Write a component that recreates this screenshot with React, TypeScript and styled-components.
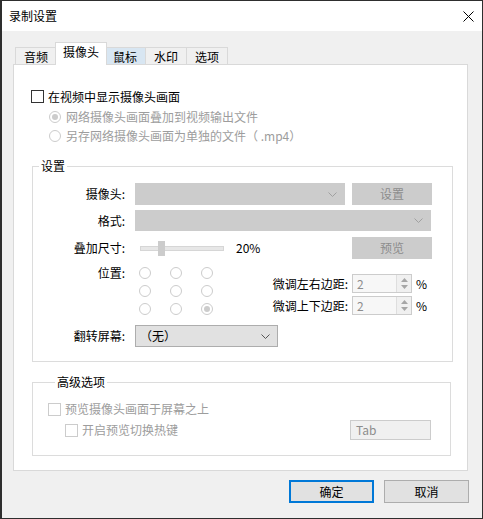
import styled, { createGlobalStyle } from 'styled-components'

const GlobalStyle = createGlobalStyle`
  html, body {
    margin: 0;
    padding: 0;
    background: #f0f0f0;
  }
  * {
    box-sizing: border-box;
  }
  body {
    font-family: "Noto Sans CJK SC", "Microsoft YaHei", sans-serif;
    font-size: 12px;
    color: #000;
  }
`

const Chevron = ({ color = '#a0a0a0' }: { color?: string }) => (
  <svg width="9" height="5" viewBox="0 0 9 5">
    <polyline points="0.5,0.5 4.5,4.5 8.5,0.5" fill="none" stroke={color} strokeWidth="1" />
  </svg>
)

const SpinArrows = () => (
  <SpinButtons>
    <svg width="7" height="4" viewBox="0 0 7 4">
      <polygon points="3.5,0 7,4 0,4" fill="#a6a6a6" />
    </svg>
    <svg width="7" height="4" viewBox="0 0 7 4">
      <polygon points="0,0 7,0 3.5,4" fill="#a6a6a6" />
    </svg>
  </SpinButtons>
)

const tabs = ['音频', '摄像头', '鼠标', '水印', '选项']

const App = () => {
  return (
    <>
      <GlobalStyle />
      <Window>
        <TitleBar>
          <span>录制设置</span>
          <svg width="11" height="11" viewBox="0 0 11 11">
            <path d="M0.5 0.5 L10.5 10.5 M10.5 0.5 L0.5 10.5" stroke="#000" strokeWidth="1" />
          </svg>
        </TitleBar>

        <Body>
          <TabStrip>
            {tabs.map((t) => (
              <Tab key={t} $active={t === '摄像头'} $hover={t === '鼠标'}>
                {t}
              </Tab>
            ))}
          </TabStrip>

          <Panel>
            <CheckRow>
              <CheckBox />
              <span>在视频中显示摄像头画面</span>
            </CheckRow>
            <RadioRow>
              <Radio $checked />
              <span>网络摄像头画面叠加到视频输出文件</span>
            </RadioRow>
            <RadioRow>
              <Radio />
              <span>另存网络摄像头画面为单独的文件（ .mp4）</span>
            </RadioRow>

            <GroupBox $width={421} $padRight={20}>
              <Legend>设置</Legend>
              <FieldRow>
                <FieldLabel>摄像头:</FieldLabel>
                <Combo $width={210} $disabled>
                  <Chevron />
                </Combo>
                <PushButton>设置</PushButton>
              </FieldRow>
              <FieldRow $top={5}>
                <FieldLabel>格式:</FieldLabel>
                <Combo $width={296} $height={21} $disabled>
                  <Chevron />
                </Combo>
              </FieldRow>
              <FieldRow $top={6}>
                <FieldLabel>叠加尺寸:</FieldLabel>
                <Slider>
                  <SliderThumb />
                </Slider>
                <Percent>20%</Percent>
                <PushButton>预览</PushButton>
              </FieldRow>
              <FieldRow $top={5} $align="flex-start">
                <FieldLabel $lineHeight={18}>位置:</FieldLabel>
                <RadioGrid>
                  {Array.from({ length: 9 }).map((_, i) => (
                    <Radio key={i} $checked={i === 8} />
                  ))}
                </RadioGrid>
                <SpinGrid>
                  <span>微调左右边距:</span>
                  <SpinBox>
                    <SpinValue>2</SpinValue>
                    <SpinArrows />
                  </SpinBox>
                  <span>%</span>
                  <span>微调上下边距:</span>
                  <SpinBox>
                    <SpinValue>2</SpinValue>
                    <SpinArrows />
                  </SpinBox>
                  <span>%</span>
                </SpinGrid>
              </FieldRow>
              <FieldRow $top={7}>
                <FieldLabel>翻转屏幕:</FieldLabel>
                <Combo $width={143}>
                  <ComboText>（无）</ComboText>
                  <Chevron color="#555" />
                </Combo>
              </FieldRow>
            </GroupBox>

            <GroupBox $width={419} $padRight={19} $padLeft={16}>
              <Legend>高级选项</Legend>
              <CheckRow $disabled>
                <CheckBox $disabled />
                <span>预览摄像头画面于屏幕之上</span>
              </CheckRow>
              <HotkeyRow>
                <CheckRow $disabled $indent={16}>
                  <CheckBox $disabled />
                  <span>开启预览切换热键</span>
                </CheckRow>
                <KeyBox>Tab</KeyBox>
              </HotkeyRow>
            </GroupBox>
          </Panel>
        </Body>

        <Footer>
          <DialogButton $default>确定</DialogButton>
          <DialogButton>取消</DialogButton>
        </Footer>
      </Window>
    </>
  )
}

export default App

const Window = styled.div`
  width: 483px;
  height: 519px;
  border: 1px solid #2e2e2e;
  border-left-width: 2px;
  background: #f0f0f0;
  display: flex;
  flex-direction: column;
  overflow: hidden;
`

const TitleBar = styled.div`
  height: 30px;
  flex: none;
  background: #fff;
  display: flex;
  align-items: center;
  justify-content: space-between;
  padding: 0 8px 0 7px;
  line-height: 16px;
`

const Body = styled.div`
  padding: 11px 14px 0 11px;
`

const TabStrip = styled.div`
  display: flex;
  align-items: flex-end;
  height: 22px;
  padding-left: 2px;
`

const Tab = styled.div<{ $active?: boolean; $hover?: boolean }>`
  position: relative;
  height: ${(p) => (p.$active ? 23 : 18)}px;
  margin: 0 ${(p) => (p.$active ? -2 : 0)}px -1px ${(p) => (p.$active ? -2 : -1)}px;
  padding: 0 ${(p) => (p.$active ? 7 : 8)}px;
  border: 1px solid #d9d9d9;
  border-bottom: ${(p) => (p.$active ? 'none' : '1px solid #d9d9d9')};
  background: ${(p) => (p.$active ? '#fff' : p.$hover ? '#d8e6f2' : '#f0f0f0')};
  z-index: ${(p) => (p.$active ? 2 : 1)};
  line-height: ${(p) => (p.$active ? 18 : 17)}px;
  white-space: nowrap;

  &:first-child {
    margin-left: 0;
  }
`

const Panel = styled.div`
  height: 407px;
  background: #fff;
  border: 1px solid #d9d9d9;
  padding: 21px 0 0 18px;
`

const CheckRow = styled.div<{ $disabled?: boolean; $indent?: number }>`
  display: flex;
  align-items: center;
  gap: 4px;
  height: ${(p) => (p.$disabled ? 20 : 21)}px;
  margin-left: ${(p) => p.$indent ?? -1}px;
  color: ${(p) => (p.$disabled ? '#9d9d9d' : '#000')};
  line-height: 16px;
`

const CheckBox = styled.span<{ $disabled?: boolean }>`
  width: 13px;
  height: 13px;
  flex: none;
  border: 1px solid ${(p) => (p.$disabled ? '#cccccc' : '#333')};
  background: #fff;
`

const RadioRow = styled.div`
  display: flex;
  align-items: center;
  gap: 5px;
  height: 19px;
  margin-left: 17px;
  color: #9d9d9d;
  line-height: 16px;
`

const Radio = styled.span<{ $checked?: boolean }>`
  width: 12px;
  height: 12px;
  flex: none;
  border-radius: 50%;
  border: 1px solid #cccccc;
  background: #fff;
  display: flex;
  align-items: center;
  justify-content: center;

  &::after {
    content: '';
    display: ${(p) => (p.$checked ? 'block' : 'none')};
    width: 6px;
    height: 6px;
    border-radius: 50%;
    background: #cccccc;
  }
`

const GroupBox = styled.fieldset<{ $width: number; $padRight: number; $padLeft?: number }>`
  width: ${(p) => p.$width}px;
  margin: 13px 0 0 0;
  padding: 9px ${(p) => p.$padRight}px 14px ${(p) => p.$padLeft ?? 0}px;
  border: 1px solid #dcdcdc;
  min-width: 0;

  & + & {
    margin-top: 12px;
  }
`

const Legend = styled.legend`
  margin-left: 6px;
  padding: 0 2px;
  line-height: 16px;
  font-size: 12px;
`

const FieldRow = styled.div<{ $top?: number; $align?: string }>`
  display: flex;
  align-items: ${(p) => p.$align ?? 'center'};
  margin-top: ${(p) => p.$top ?? 0}px;
`

const FieldLabel = styled.div<{ $lineHeight?: number }>`
  width: 92px;
  margin-right: 10px;
  flex: none;
  text-align: right;
  line-height: ${(p) => p.$lineHeight ?? 16}px;
`

const Combo = styled.div<{ $width: number; $height?: number; $disabled?: boolean }>`
  width: ${(p) => p.$width}px;
  height: ${(p) => p.$height ?? 22}px;
  display: flex;
  align-items: center;
  justify-content: space-between;
  padding: 0 7px 0 4px;
  background: ${(p) => (p.$disabled ? '#cccccc' : '#e1e1e1')};
  border: 1px solid ${(p) => (p.$disabled ? '#cccccc' : '#adadad')};

  svg {
    margin-left: auto;
  }
`

const ComboText = styled.span`
  line-height: 16px;
`

const PushButton = styled.div`
  width: 80px;
  height: 22px;
  margin-left: auto;
  background: #cccccc;
  border: 1px solid #cccccc;
  color: #8d8d8d;
  display: flex;
  align-items: center;
  justify-content: center;
  line-height: 16px;
`

const Slider = styled.div`
  position: relative;
  width: 84px;
  height: 5px;
  margin-left: 5px;
  background: #e7e7e7;
  border: 1px solid #d6d6d6;
`

const SliderThumb = styled.span`
  position: absolute;
  left: 17px;
  top: -6px;
  width: 7px;
  height: 15px;
  background: #cccccc;
`

const Percent = styled.span`
  margin-left: 12px;
  line-height: 16px;
`

const RadioGrid = styled.div`
  display: grid;
  grid-template-columns: repeat(3, 31px);
  grid-auto-rows: 18px;
  align-items: center;
  padding-left: 4px;
  flex: none;
`

const SpinGrid = styled.div`
  flex: 1;
  margin-top: 10px;
  display: grid;
  grid-template-columns: 1fr 60px 16px;
  grid-auto-rows: 19px;
  column-gap: 4px;
  row-gap: 3px;
  align-items: center;
  line-height: 16px;

  & > span:first-child,
  & > span:nth-child(4) {
    justify-self: end;
  }
`

const SpinBox = styled.div`
  height: 19px;
  display: flex;
  border: 1px solid #cccccc;
  background: #f7f7f7;
`

const SpinValue = styled.span`
  flex: 1;
  padding-left: 4px;
  color: #8d8d8d;
  line-height: 17px;
`

const SpinButtons = styled.div`
  width: 15px;
  display: flex;
  flex-direction: column;
  align-items: center;
  justify-content: space-around;
  padding: 2px 0;
  background: #f0f0f0;
  border-left: 1px solid #dedede;
`

const HotkeyRow = styled.div`
  display: flex;
  align-items: center;
  height: 22px;
`

const KeyBox = styled.div`
  width: 81px;
  height: 20px;
  margin-left: auto;
  padding-left: 5px;
  border: 1px solid #cccccc;
  background: #f0f0f0;
  color: #8d8d8d;
  line-height: 18px;
`

const Footer = styled.div`
  display: flex;
  justify-content: flex-end;
  gap: 10px;
  padding: 9px 13px 0 0;
`

const DialogButton = styled.div<{ $default?: boolean }>`
  width: 85px;
  height: 23px;
  display: flex;
  align-items: center;
  justify-content: center;
  background: #e1e1e1;
  border: 1px solid ${(p) => (p.$default ? '#0078d7' : '#adadad')};
  box-shadow: ${(p) => (p.$default ? 'inset 0 0 0 1px #0078d7' : 'none')};
  line-height: 16px;
`
